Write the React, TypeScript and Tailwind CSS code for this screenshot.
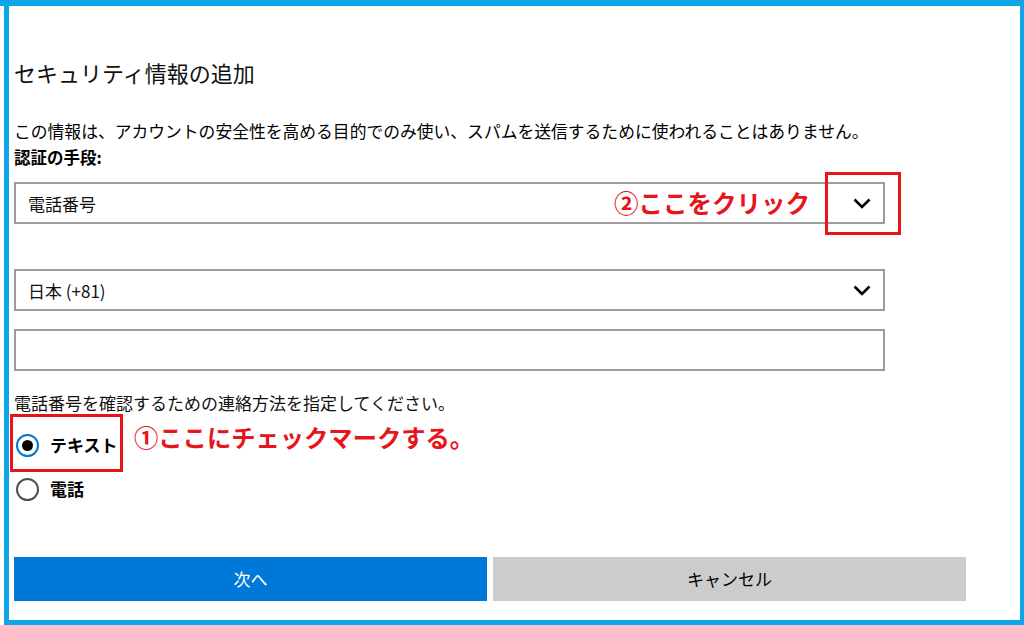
import React from 'react';

const font = { fontFamily: '"Noto Sans CJK JP", "Noto Sans", sans-serif' };

const Chevron = () => (
    <svg width="18" height="11" viewBox="0 0 18 11" fill="none">
        <path d="M1.5 1.5 L9 9 L16.5 1.5" stroke="#000" strokeWidth="2.6" />
    </svg>
);

const SelectBox = ({ value, arrow = true }: { value?: string; arrow?: boolean }) => (
    <div className="flex h-[42px] w-[871px] items-center justify-between border-2 border-[#9c9c9c] bg-white pl-[12px] pr-[12px]">
        <span className="text-[17px] leading-none text-[#111]">{value}</span>
        {arrow && <Chevron />}
    </div>
);

const Radio = ({ label, checked }: { label: string; checked?: boolean }) => (
    <div className="flex h-[44px] items-center gap-[11px] pl-[2px]">
        <div
            className={
                checked
                    ? 'flex h-[23px] w-[23px] items-center justify-center rounded-full border-[2.5px] border-[#0078d4]'
                    : 'flex h-[23px] w-[23px] items-center justify-center rounded-full border-[2.5px] border-[#505050]'
            }
        >
            {checked && <div className="h-[11px] w-[11px] rounded-full bg-black" />}
        </div>
        <span className="text-[17px] font-bold text-black">{label}</span>
    </div>
);

export default function App() {
    return (
        <div className="relative h-[625px] w-[1024px] overflow-hidden bg-white" style={font}>
            <div className="flex h-full flex-col border-t-[6px] border-[#0ea5e9]">
                <div className="ml-[4px] flex flex-1 flex-col border-b-[5px] border-l-[5px] border-r-[4px] border-[#0ea5e9] bg-white pl-[5px]">
                    <h1 className="mt-[52px] text-[22px] leading-[28px] text-[#111]">セキュリティ情報の追加</h1>
                    <p className="mt-[32px] text-[16.8px] leading-[26px] text-black">
                        この情報は、アカウントの安全性を高める目的でのみ使い、スパムを送信するために使われることはありません。
                    </p>
                    <p className="text-[16.5px] font-bold leading-[26px] text-black">認証の手段:</p>
                    <div className="mt-[12px]">
                        <SelectBox value="電話番号" />
                    </div>
                    <div className="mt-[45px]">
                        <SelectBox value="日本 (+81)" />
                    </div>
                    <div className="mt-[18px]">
                        <SelectBox arrow={false} />
                    </div>
                    <p className="mt-[20px] text-[17px] leading-[24px] text-[#111]">
                        電話番号を確認するための連絡方法を指定してください。
                    </p>
                    <div className="mt-[8px] flex flex-col">
                        <Radio label="テキスト" checked />
                        <Radio label="電話" />
                    </div>
                    <div className="mt-[46px] flex gap-[6px]">
                        <button className="flex h-[44px] w-[473px] items-center justify-center bg-[#0078d7] text-[17px] text-white">
                            次へ
                        </button>
                        <button className="flex h-[44px] w-[473px] items-center justify-center bg-[#cccccc] text-[17px] text-black">
                            キャンセル
                        </button>
                    </div>
                </div>
            </div>

            {/* annotations */}
            <div className="absolute left-[825px] top-[172px] h-[63px] w-[76px] border-[3px] border-[#e8141c]" />
            <div className="absolute left-[614px] top-[187px] text-[24.5px] font-bold leading-[32px] text-[#e8141c]">
                ②ここをクリック
            </div>
            <div className="absolute left-[10px] top-[414px] h-[58px] w-[113px] border-[3px] border-[#e8141c]" />
            <div className="absolute left-[134px] top-[421px] text-[24.3px] font-bold leading-[32px] text-[#e8141c]">
                ①ここにチェックマークする。
            </div>
        </div>
    );
}
